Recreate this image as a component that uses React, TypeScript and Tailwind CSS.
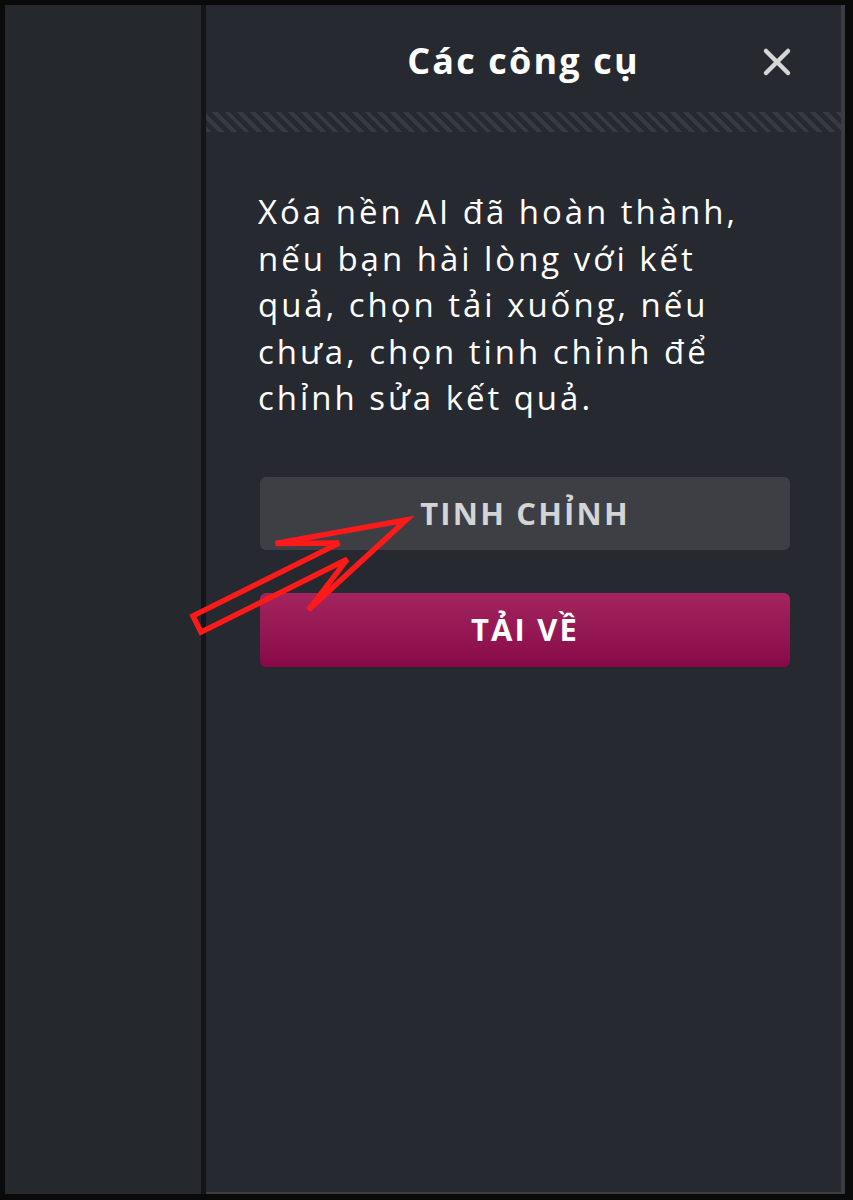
import React from 'react';

const font = { fontFamily: '"Open Sans", "Noto Sans", sans-serif' };

// red annotation arrow pointing at the first button
const Arrow: React.FC = () => (
  <svg className="absolute left-0 top-0 pointer-events-none" width="853" height="1200" viewBox="0 0 853 1200">
    <polygon
      points="406,520 275.6,543.4 339.2,543.1 193,615.9 201,632.1 347.2,559.3 308.6,609.8"
      fill="none"
      stroke="#ff1a1a"
      strokeWidth="5.5"
      strokeLinejoin="miter"
    />
  </svg>
);

const App: React.FC = () => {
  return (
    <div className="relative w-[853px] h-[1200px] bg-[#0a0a0b] pt-[5px] pl-[5px] pr-[8px] pb-[6px] flex" style={font}>
      {/* left column */}
      <div className="w-[196px] h-full bg-[#25282d]" />
      <div className="w-[5px] h-full bg-[#131519]" />

      {/* tools panel */}
      <div className="flex-1 h-full bg-[#26292f] border-r-[4px] border-b-[2px] border-[#3a3d42] flex flex-col">
        <div className="relative h-[107px] flex items-center justify-center">
          <h2 className="text-[36px] font-bold text-white tracking-[0.06em] mt-[4px]">Các công cụ</h2>
          <button className="absolute right-[48px] top-[41px] text-[#d6d6d6]">
            <svg width="32" height="32" viewBox="0 0 32 32">
              <path d="M5 5 L27 27 M27 5 L5 27" stroke="currentColor" strokeWidth="4.5" strokeLinecap="round" />
            </svg>
          </button>
        </div>
        <div className="h-[20px] bg-[repeating-linear-gradient(45deg,#3b3e44_0px,#3b3e44_4px,#26292f_4px,#26292f_9px)] opacity-80" />

        <div className="pl-[52px] pt-[57px]">
          <p className="w-[500px] text-[33px] leading-[46.5px] text-white tracking-[0.09em]">
            Xóa nền AI đã hoàn thành, nếu bạn hài lòng với kết quả, chọn tải xuống, nếu chưa, chọn tinh chỉnh để chỉnh sửa kết quả.
          </p>

          <div className="mt-[55px] flex flex-col gap-[43px] w-[530px] ml-[2px]">
            <button className="h-[73px] rounded-md bg-[#3d3f45] text-[#d4d4d4] text-[31px] font-bold tracking-[0.07em]">
              TINH CHỈNH
            </button>
            <button className="h-[74px] rounded-md bg-gradient-to-b from-[#a3245f] to-[#880848] text-white text-[31px] font-bold tracking-[0.07em]">
              TẢI VỀ
            </button>
          </div>
        </div>
      </div>

      <Arrow />
    </div>
  );
};

export default App;
